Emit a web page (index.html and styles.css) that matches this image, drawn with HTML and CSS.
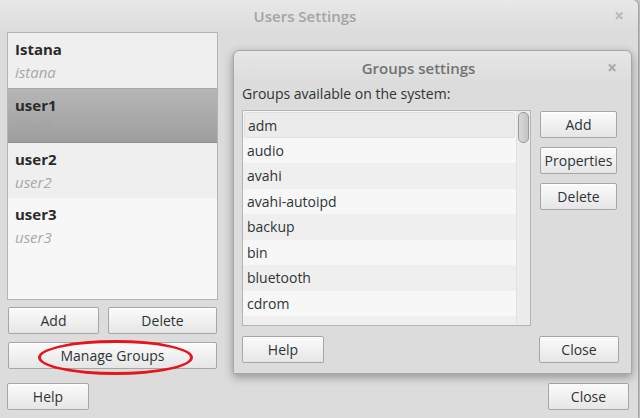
FILE: index.html
```html
<!DOCTYPE html>
<html>
<head>
<meta charset="utf-8">
<link rel="stylesheet" href="styles.css">
</head>
<body>
<div class="window">
  <div class="titlebar">
    <span class="title">Users Settings</span>
    <span class="close-x">×</span>
  </div>
  <div class="main">
    <div class="left">
      <div class="userlist">
        <div class="user even"><div class="uname">Istana</div><div class="ulogin">istana</div></div>
        <div class="user selected"><div class="uname">user1</div><div class="ulogin">user1</div></div>
        <div class="user even"><div class="uname">user2</div><div class="ulogin">user2</div></div>
        <div class="user odd"><div class="uname">user3</div><div class="ulogin">user3</div></div>
      </div>
      <div class="btnrow">
        <button class="btn add-btn">Add</button>
        <button class="btn del-btn">Delete</button>
      </div>
      <div class="manage-wrap">
        <button class="btn manage">Manage Groups</button>
        <span class="ring"></span>
      </div>
    </div>
  </div>
  <div class="bottom">
    <button class="btn help">Help</button>
    <button class="btn close">Close</button>
  </div>

  <div class="dialog">
    <div class="dtitle">
      <span class="title">Groups settings</span>
      <span class="close-x dclose">×</span>
    </div>
    <div class="dlabel">Groups available on the system:</div>
    <div class="dbody">
      <div class="glist">
        <div class="grows">
          <div class="grow focus">adm</div>
          <div class="grow">audio</div>
          <div class="grow">avahi</div>
          <div class="grow">avahi-autoipd</div>
          <div class="grow">backup</div>
          <div class="grow">bin</div>
          <div class="grow">bluetooth</div>
          <div class="grow">cdrom</div>
          <div class="grow"></div>
        </div>
        <div class="scroll"><div class="thumb"></div></div>
      </div>
      <div class="gbtns">
        <button class="btn gbtn">Add</button>
        <button class="btn gbtn">Properties</button>
        <button class="btn gbtn">Delete</button>
      </div>
    </div>
    <div class="dbottom">
      <button class="btn help">Help</button>
      <button class="btn close">Close</button>
    </div>
  </div>
</div>
</body>
</html>
```

FILE: styles.css
```css
html, body {
  margin: 0;
  padding: 0;
  background: #c8c8c8;
}
body {
  width: 640px;
  height: 418px;
  overflow: hidden;
  font-family: "Open Sans", "DejaVu Sans", sans-serif;
  font-size: 13px;
  color: #2e3436;
}
.window {
  position: relative;
  width: 638px;
  height: 418px;
  background: #dcdcdc;
  border-top-right-radius: 6px;
  display: flex;
  flex-direction: column;
  box-shadow: 1px 0 2px rgba(0,0,0,0.25);
}
.titlebar {
  height: 32px;
  flex: none;
  display: flex;
  align-items: center;
  justify-content: center;
  position: relative;
  background: linear-gradient(#e8e8e8, #dcdcdc);
  border-top-right-radius: 6px;
}
.title {
  font-size: 15px;
  font-weight: 600;
  color: #a4a4a4;
  margin-left: -28px;
}
.close-x {
  position: absolute;
  right: 14px;
  top: 4px;
  font-size: 17px;
  font-weight: bold;
  color: #b8b8b8;
}
.main {
  flex: 1;
  padding: 0 0 0 7px;
}
.left {
  width: 211px;
  display: flex;
  flex-direction: column;
}
.userlist {
  height: 266px;
  border: 1px solid #b4b4b4;
  background: #f7f7f7;
  display: flex;
  flex-direction: column;
}
.user {
  height: 55px;
  padding: 4px 0 0 7px;
  box-sizing: border-box;
}
.user.even { background: #efefef; }
.user.odd { background: #f7f7f7; }
.user.selected {
  background: linear-gradient(#b6b6b6, #9e9e9e);
  border-top: 1px solid #a8a8a8;
  border-bottom: 1px solid #8e8e8e;
}
.uname {
  font-size: 15px;
  font-weight: bold;
  color: #2a2a2a;
  line-height: 24px;
}
.ulogin {
  font-size: 15px;
  font-style: italic;
  color: #a8a8a8;
  line-height: 22px;
}
.user.selected .ulogin { color: #a2a2a2; }
.btn {
  font-family: "Open Sans", "DejaVu Sans", sans-serif;
  font-size: 14px;
  color: #2e3436;
  height: 27px;
  padding: 0;
  border: 1px solid #a6a6a6;
  border-radius: 2px;
  background: linear-gradient(#fbfbfb, #e6e6e6);
  box-shadow: inset 0 1px 0 #ffffff;
}
.btnrow {
  display: flex;
  gap: 9px;
  margin-top: 7px;
  padding-left: 1px;
}
.add-btn { width: 91px; }
.del-btn { width: 109px; }
.manage-wrap {
  position: relative;
  margin-top: 8px;
  padding-left: 1px;
}
.manage { width: 209px; }
.ring {
  position: absolute;
  left: 31px;
  top: -2px;
  width: 149px;
  height: 29px;
  border: 3px solid #e8141c;
  border-radius: 50%;
}
.bottom {
  height: 27px;
  flex: none;
  display: flex;
  justify-content: space-between;
  padding: 0 9px 8px 7px;
}
.help { width: 82px; }
.close { width: 81px; }
.dialog {
  position: absolute;
  left: 233px;
  top: 50px;
  width: 397px;
  height: 322px;
  background: #dcdcdc;
  border: 1px solid #a8a8a8;
  border-radius: 6px 6px 0 0;
  box-shadow: 0 3px 10px rgba(0,0,0,0.35);
  display: flex;
  flex-direction: column;
}
.dtitle {
  height: 34px;
  flex: none;
  display: flex;
  align-items: center;
  justify-content: center;
  position: relative;
  background: linear-gradient(#e6e6e6, #dcdcdc);
  border-radius: 6px 6px 0 0;
}
.dtitle .title {
  color: #727272;
  margin-left: -28px;
}
.dclose {
  right: 14px;
  top: 5px;
  color: #a8a8a8;
}
.dlabel {
  padding-left: 8px;
  font-size: 14px;
  color: #2e3436;
  height: 25px;
  line-height: 18px;
}
.dbody {
  display: flex;
  padding-left: 8px;
  gap: 9px;
}
.glist {
  width: 287px;
  height: 214px;
  border: 1px solid #b4b4b4;
  background: #f7f7f7;
  display: flex;
  overflow: hidden;
}
.grows {
  flex: 1;
  padding-top: 1px;
}
.grow {
  height: 25.5px;
  line-height: 25px;
  padding-left: 4px;
  font-size: 14px;
  color: #2e3436;
  box-sizing: border-box;
}
.grow:nth-child(odd) { background: #efefef; }
.grow:nth-child(even) { background: #f7f7f7; }
.grow.focus {
  background: #ececec;
  border: 1px solid #e0e0e0;
  border-radius: 2px;
  margin: 0 1px;
  padding-left: 3px;
}
.scroll {
  width: 13px;
  background: #ececec;
  border-left: 1px solid #e2e2e2;
  padding-top: 1px;
}
.thumb {
  width: 9px;
  height: 29px;
  margin-left: 1px;
  border: 1px solid #9a9a9a;
  border-radius: 5px;
  background: linear-gradient(90deg, #d8d8d8, #c4c4c4);
}
.gbtns {
  display: flex;
  flex-direction: column;
  gap: 9px;
  padding-top: 1px;
}
.gbtn { width: 77px; }
.dbottom {
  display: flex;
  justify-content: space-between;
  padding: 10px 12px 0 8px;
}
.dbottom .close { width: 80px; }
```
